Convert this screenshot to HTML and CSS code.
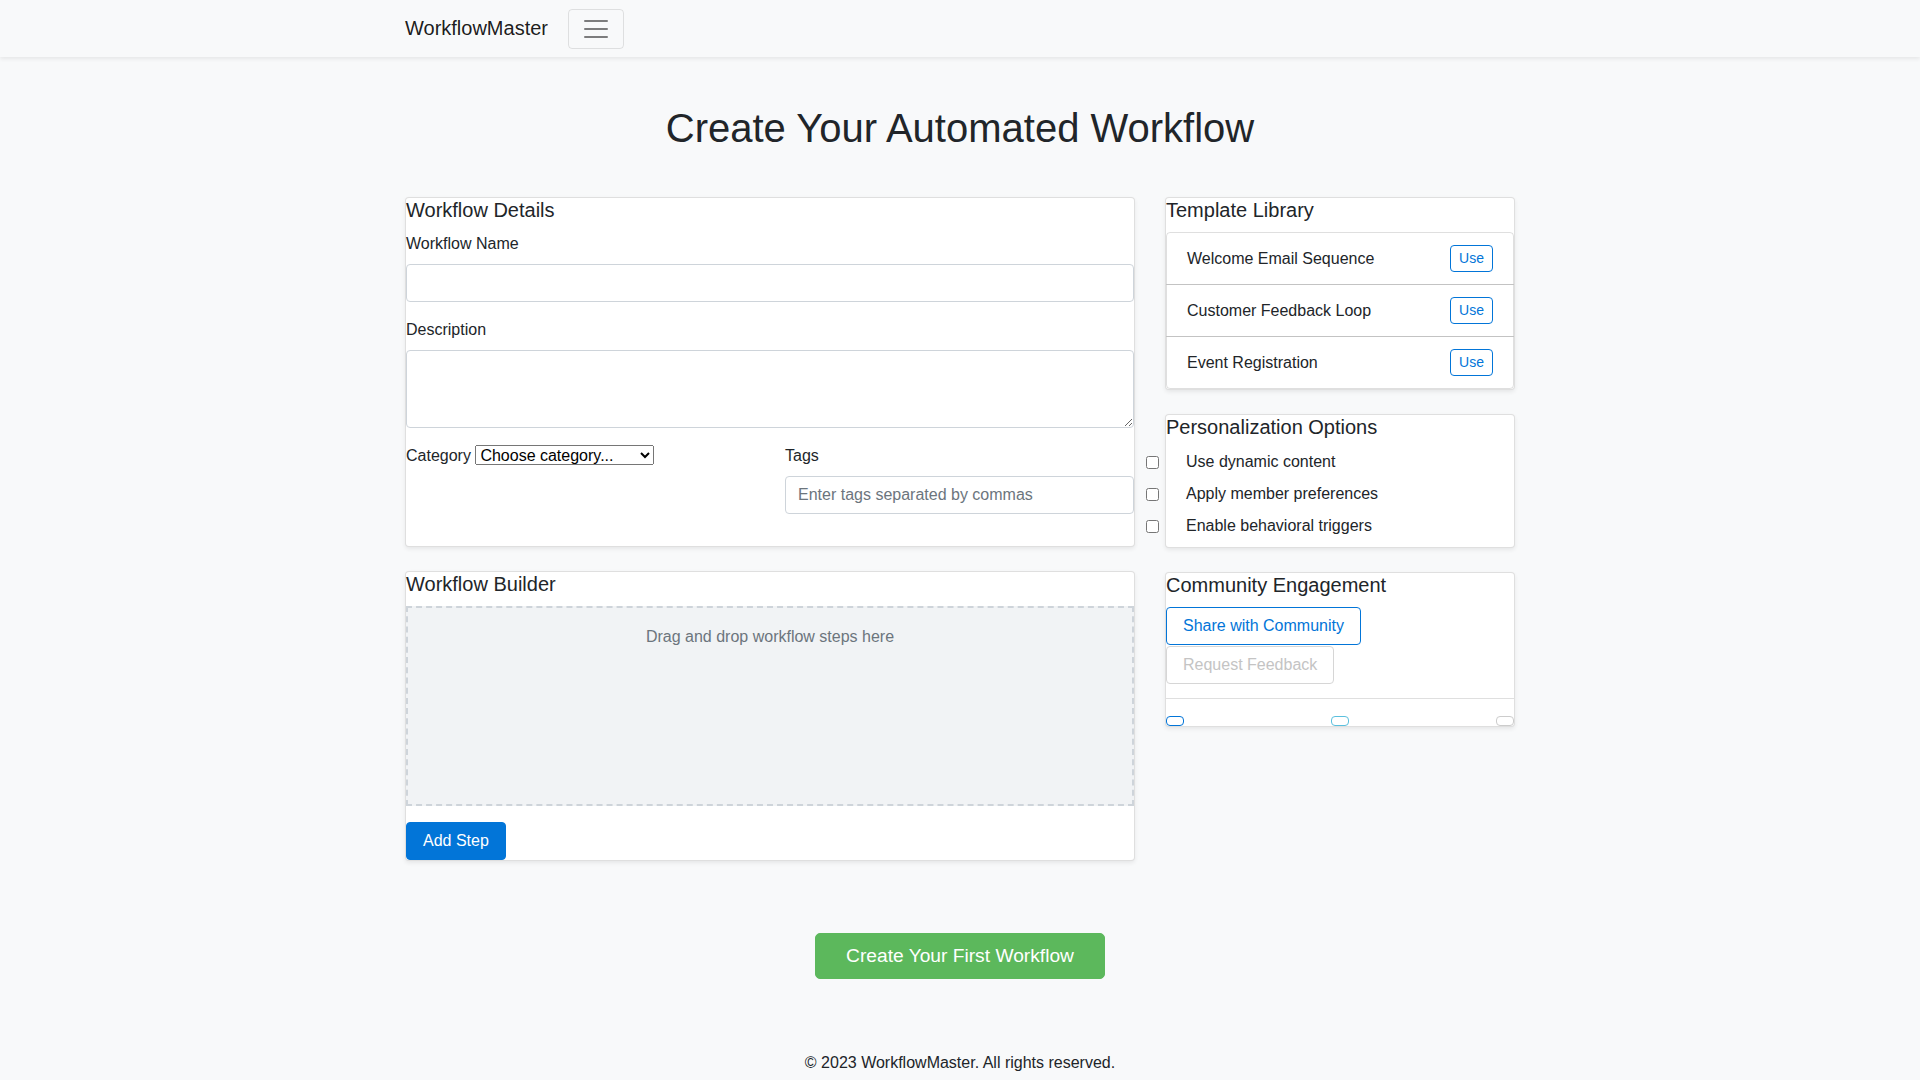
FILE: index.html
```html
<!doctype html>
<html>
<head>
<meta charset="utf-8">
<title>WorkflowMaster - Create Your Automated Workflow</title>
<link rel="stylesheet" href="styles.css">
</head>
<body>

<nav class="navbar">
	<div class="container nav-inner">
		<a class="brand" href="#">WorkflowMaster</a>
		<button class="toggler" type="button">
			<svg viewBox="0 0 30 30" width="30" height="30"><path d="M4 7h22M4 15h22M4 23h22" stroke="rgba(0,0,0,.5)" stroke-width="2" stroke-linecap="round" fill="none"/></svg>
		</button>
	</div>
</nav>

<main class="container">
	<h1 class="page-title">Create Your Automated Workflow</h1>

	<div class="layout">
		<div class="col-main">
			<section class="card details">
				<h5 class="card-title">Workflow Details</h5>
				<div class="field">
					<label>Workflow Name</label>
					<input class="input" type="text">
				</div>
				<div class="field">
					<label>Description</label>
					<textarea class="input"></textarea>
				</div>
				<div class="field-row">
					<div class="field">
						<label class="inline">Category</label>
						<select class="plain">
							<option>Choose category...</option>
						</select>
					</div>
					<div class="field">
						<label>Tags</label>
						<input class="input" type="text" placeholder="Enter tags separated by commas">
					</div>
				</div>
			</section>

			<section class="card builder">
				<h5 class="card-title">Workflow Builder</h5>
				<div class="dropzone">Drag and drop workflow steps here</div>
				<button class="btn btn-primary">Add Step</button>
			</section>
		</div>

		<div class="col-side">
			<section class="card">
				<h5 class="card-title">Template Library</h5>
				<ul class="list-group">
					<li class="list-item"><span>Welcome Email Sequence</span><button class="btn btn-outline btn-use">Use</button></li>
					<li class="list-item"><span>Customer Feedback Loop</span><button class="btn btn-outline btn-use">Use</button></li>
					<li class="list-item"><span>Event Registration</span><button class="btn btn-outline btn-use">Use</button></li>
				</ul>
			</section>

			<section class="card personal">
				<h5 class="card-title">Personalization Options</h5>
				<label class="check"><input type="checkbox">Use dynamic content</label>
				<label class="check"><input type="checkbox">Apply member preferences</label>
				<label class="check"><input type="checkbox">Enable behavioral triggers</label>
			</section>

			<section class="card community">
				<h5 class="card-title">Community Engagement</h5>
				<div class="btn-wrap">
					<button class="btn btn-outline">Share with Community</button>
					<button class="btn btn-muted">Request Feedback</button>
				</div>
				<div class="card-foot">
					<span class="dot dot-blue"></span>
					<span class="dot dot-info"></span>
					<span class="dot dot-gray"></span>
				</div>
			</section>
		</div>
	</div>

	<div class="cta">
		<button class="btn btn-cta">Create Your First Workflow</button>
	</div>
</main>

<footer class="footer">© 2023 WorkflowMaster. All rights reserved.</footer>

</body>
</html>
```

FILE: styles.css
```css
*{ box-sizing:border-box;}
body{ margin:0; background:#f8f9fa; color:#212529; font-family:"Liberation Sans", Arial, sans-serif; font-size:16px; line-height:1.5;}

.container{ width:1110px; margin:0 auto;}

/* top bar */
.navbar{ background:#f8f9fa; padding:9px 0 8px; box-shadow:0 2px 4px rgba(0,0,0,.075);}
.nav-inner{ display:flex; align-items:center;}
.brand{ font-size:20px; line-height:30px; padding:4px 0 6px; margin-right:20px; color:rgba(0,0,0,.9); text-decoration:none;}
.toggler{ display:flex; width:56px; height:40px; padding:4px 12px; border:1px solid rgba(0,0,0,.1); border-radius:4px; background:transparent;}

.page-title{ font-size:40px; font-weight:400; line-height:1.2; text-align:center; margin:47px 0 45px;}

.layout{ display:flex; gap:30px; align-items:flex-start;}
.col-main{ width:730px;}
.col-side{ width:350px;}

.card{ background:#fff; border:1px solid rgba(0,0,0,.125); border-radius:4px; box-shadow:0 2px 4px rgba(0,0,0,.075); margin-bottom:24px;}
.card-title{ font-size:20px; font-weight:400; line-height:1.2; margin:0 0 10px;}

/* form */
.details{ padding-bottom:16px;}
.field{ margin-bottom:16px;}
.field label{ display:block; margin-bottom:8px;}
.field label.inline{ display:inline;}
.field-row{ display:flex; gap:30px;}
.field-row .field{ flex:1;}
.input{ display:block; width:100%; height:38px; padding:6px 12px; font:inherit; color:#495057; background:#fff; border:1px solid #ced4da; border-radius:4px;}
.input::placeholder{ color:#6c757d;}
textarea.input{ height:78px; resize:vertical;}
select.plain{ font-family:"Liberation Sans", Arial, sans-serif; font-size:16px; width:179px; height:20px; color:#000;}

.dropzone{ height:200px; padding:17px 14px; margin-bottom:16px; border:2px dashed #ced4da; background:#f1f3f5; color:#6c757d; text-align:center;}

/* buttons */
.btn{ display:inline-block; font:inherit; font-size:16px; line-height:24px; padding:6px 16px; border:1px solid transparent; border-radius:4px; background:#fff; cursor:pointer;}
.btn-primary{ background:#0275d8; border-color:#0275d8; color:#fff;}
.btn-outline{ color:#0275d8; border-color:#0275d8;}
.btn-muted{ color:#c4c4c4; border-color:#d6d6d6;}
.btn-use{ font-size:14px; line-height:21px; padding:2px 8px;}
.btn-cta{ background:#5cb85c; border-color:#5cb85c; color:#fff; font-size:19.2px; line-height:28.8px; padding:7.6px 30px; border-radius:5px;}

/* template list */
.list-group{ margin:10px 0 0; padding:0; list-style:none;}
.list-item{ display:flex; justify-content:space-between; align-items:center; padding:12px 20px; border:1px solid rgba(0,0,0,.125); margin-bottom:-1px;}
.list-item:first-child{ border-radius:4px 4px 0 0;}
.list-item:last-child{ border-radius:0 0 4px 4px; margin-bottom:0;}

/* checkboxes */
.personal{ padding-bottom:1px;}
.personal .card-title{ margin-bottom:11px;}
.check{ display:flex; align-items:center; padding-left:20px; margin-bottom:8px; line-height:24px;}
.check input{ width:13px; height:13px; margin:0 27px 0 -40px;}

/* community */
.btn-wrap{ display:flex; flex-wrap:wrap; gap:1px 4px; margin-bottom:14px;}
.card-foot{ display:flex; justify-content:space-between; padding-top:17px; border-top:1px solid rgba(0,0,0,.125);}
.dot{ width:18px; height:10px; border:1.5px solid #ccc; border-radius:4px;}
.dot-blue{ border-color:#0275d8;}
.dot-info{ border-color:#5bc0de;}

.cta{ text-align:center; margin:48px 0 49px;}
.footer{ text-align:center; padding:23px 0 16px;}
```
